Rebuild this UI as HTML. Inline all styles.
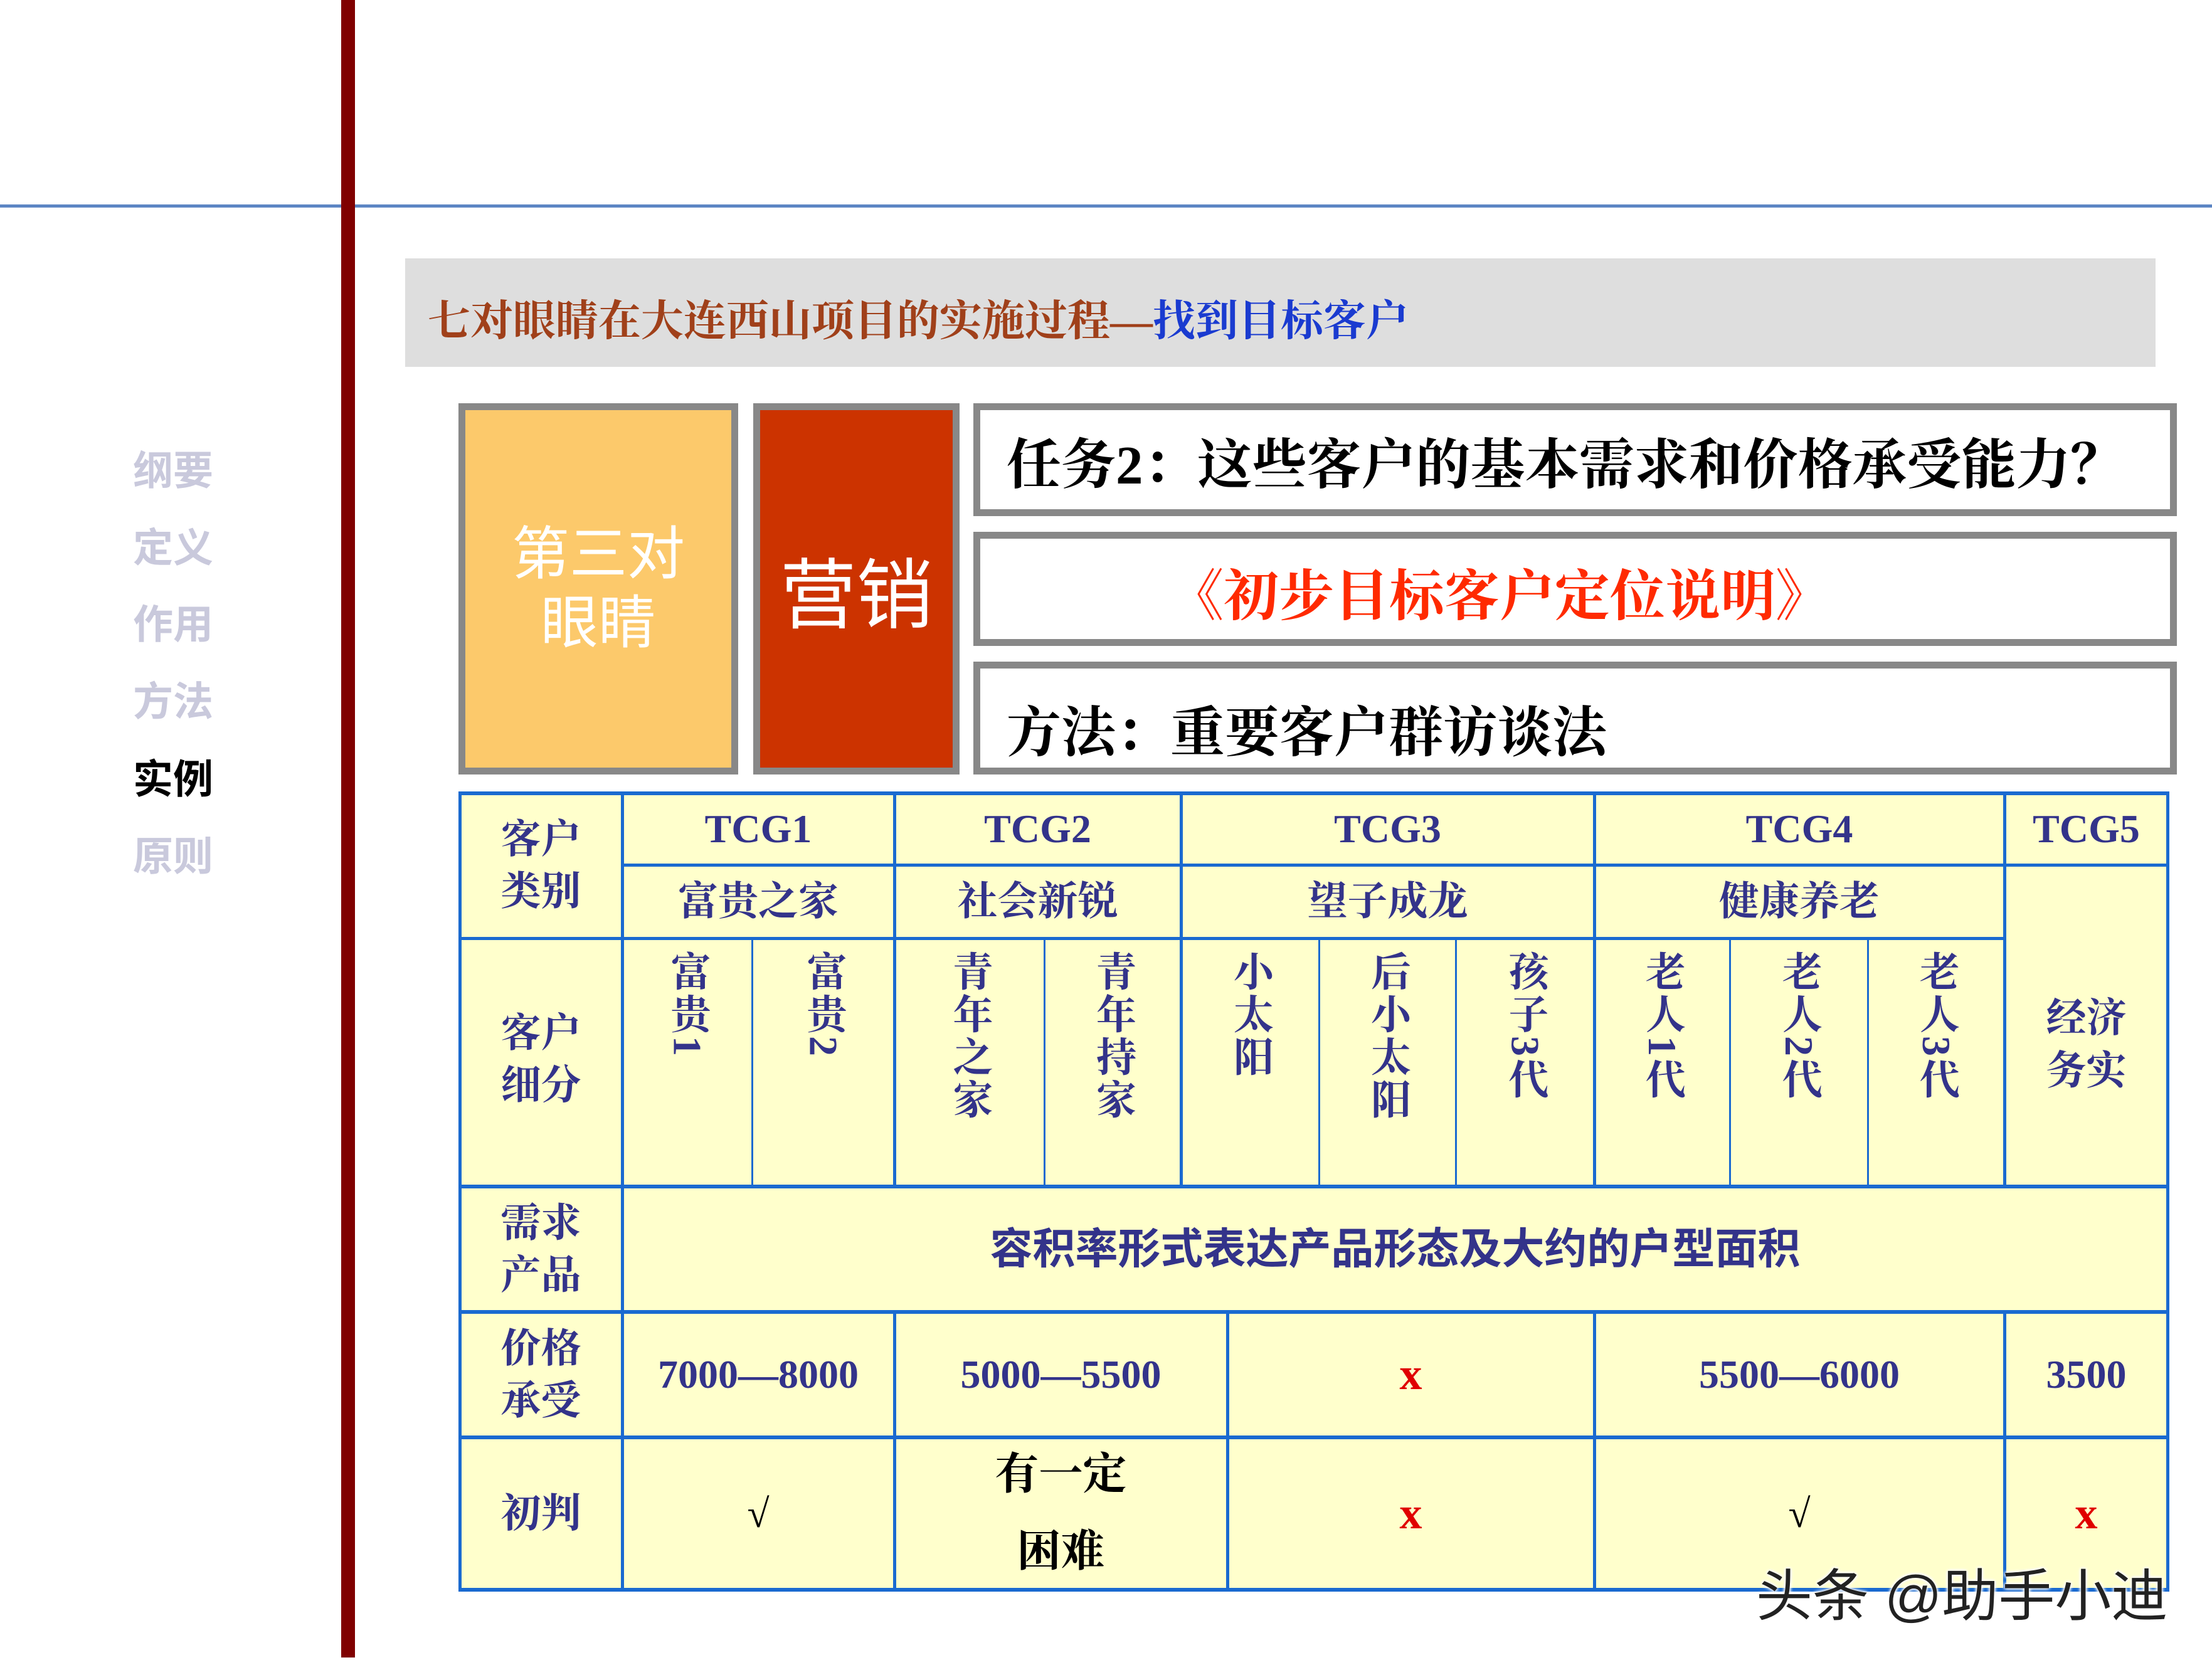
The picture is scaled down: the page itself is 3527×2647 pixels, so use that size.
<!DOCTYPE html>
<html><head><meta charset="utf-8"><style>
*{margin:0;padding:0;box-sizing:border-box}
body{width:3527px;height:2647px;background:#fff;position:relative;overflow:hidden;font-family:"Liberation Sans","Noto Sans CJK SC",sans-serif}
.a{position:absolute}
.nav{position:absolute;left:212px;font-size:64px;font-weight:bold;color:#c9c9dc;font-family:"Liberation Sans","Noto Sans CJK SC",sans-serif}
.box{position:absolute;border:11px solid #888;background:#fff;display:flex;align-items:center}
.c{position:absolute;display:flex;align-items:center;justify-content:center;text-align:center;color:#33338a;font-size:64px;line-height:1.3;font-weight:bold;font-family:"Liberation Serif","Noto Serif CJK SC",serif}
.v{writing-mode:vertical-rl;text-orientation:mixed;justify-content:flex-start;padding-top:20px;line-height:1;letter-spacing:4px}
.h{position:absolute;background:#1a6ad0}
</style></head><body>
<div class="a" style="left:0;top:326px;width:3527px;height:5px;background:#5c86c4"></div>
<div class="a" style="left:544px;top:0;width:22px;height:2643px;background:#800000"></div>

<div class="nav" style="top:700px">纲要</div>
<div class="nav" style="top:823px">定义</div>
<div class="nav" style="top:945px">作用</div>
<div class="nav" style="top:1068px">方法</div>
<div class="nav" style="top:1192px;color:#000">实例</div>
<div class="nav" style="top:1315px">原则</div>

<div class="a" style="left:646px;top:412px;width:2791px;height:173px;background:#dedede"></div>
<div class="a" style="left:682px;top:458px;font-size:68px;color:#a0401a;white-space:nowrap;font-weight:bold;font-family:'Liberation Serif','Noto Serif CJK SC',serif">七对眼睛在大连西山项目的实施过程—<span style="color:#1a3bd0">找到目标客户</span></div>

<div class="a" style="left:731px;top:643px;width:446px;height:592px;background:#fcc96b;border:11px solid #888;display:flex;align-items:center;justify-content:center;text-align:center;color:#fff;font-size:92px;line-height:1.2">第三对<br>眼睛</div>
<div class="a" style="left:1201px;top:643px;width:329px;height:592px;background:#cc3300;border:11px solid #888;display:flex;align-items:center;justify-content:center;color:#fff;font-size:122px">营销</div>

<div class="box" style="left:1552px;top:643px;width:1919px;height:180px;padding-left:42px;font-size:87px;color:#000;font-weight:bold;font-family:'Liberation Serif','Noto Serif CJK SC',serif">任务2：这些客户的基本需求和价格承受能力？</div>
<div class="box" style="left:1552px;top:848px;width:1919px;height:182px;padding-left:300px;font-size:88px;color:#ff2a00;padding-top:10px;font-weight:bold;font-family:'Liberation Serif','Noto Serif CJK SC',serif">《初步目标客户定位说明》</div>
<div class="box" style="left:1552px;top:1055px;width:1919px;height:180px;padding-left:42px;padding-top:30px;font-size:87px;color:#000;font-weight:bold;font-family:'Liberation Serif','Noto Serif CJK SC',serif">方法：重要客户群访谈法</div>

<div class="a" style="left:733px;top:1264px;width:2724px;height:1271px;background:#ffffcc"></div>
<div class="h" style="left:733px;top:1262px;width:2724px;height:6px"></div>
<div class="h" style="left:992px;top:1377px;width:2465px;height:5px"></div>
<div class="h" style="left:733px;top:1494px;width:2463px;height:5px"></div>
<div class="h" style="left:733px;top:1889px;width:2724px;height:6px"></div>
<div class="h" style="left:733px;top:2089px;width:2724px;height:6px"></div>
<div class="h" style="left:733px;top:2289px;width:2724px;height:6px"></div>
<div class="h" style="left:733px;top:2532px;width:2724px;height:6px"></div>
<div class="h" style="left:731px;top:1262px;width:5px;height:1276px"></div>
<div class="h" style="left:3454px;top:1262px;width:5px;height:1276px"></div>
<div class="h" style="left:990px;top:1262px;width:5px;height:1276px"></div>
<div class="h" style="left:1424px;top:1262px;width:5px;height:630px"></div>
<div class="h" style="left:2540px;top:1262px;width:5px;height:630px"></div>
<div class="h" style="left:3194px;top:1262px;width:5px;height:630px"></div>
<div class="h" style="left:1881px;top:1262px;width:5px;height:630px"></div>
<div class="h" style="left:1424px;top:2092px;width:5px;height:443px"></div>
<div class="h" style="left:1955px;top:2092px;width:5px;height:443px"></div>
<div class="h" style="left:2540px;top:2092px;width:5px;height:443px"></div>
<div class="h" style="left:3194px;top:2092px;width:5px;height:443px"></div>
<div class="h" style="left:1198px;top:1496px;width:3px;height:396px"></div>
<div class="h" style="left:1664px;top:1496px;width:3px;height:396px"></div>
<div class="h" style="left:2102px;top:1496px;width:3px;height:396px"></div>
<div class="h" style="left:2320px;top:1496px;width:3px;height:396px"></div>
<div class="h" style="left:2757px;top:1496px;width:3px;height:396px"></div>
<div class="h" style="left:2977px;top:1496px;width:3px;height:396px"></div>

<div class="c" style="left:733px;top:1264px;width:259px;height:232px">客户<br>类别</div>
<div class="c" style="left:992px;top:1264px;width:434px;height:115px">TCG1</div>
<div class="c" style="left:1426px;top:1264px;width:457px;height:115px">TCG2</div>
<div class="c" style="left:1883px;top:1264px;width:659px;height:115px">TCG3</div>
<div class="c" style="left:2542px;top:1264px;width:654px;height:115px">TCG4</div>
<div class="c" style="left:3196px;top:1264px;width:261px;height:115px">TCG5</div>
<div class="c" style="left:992px;top:1379px;width:434px;height:117px">富贵之家</div>
<div class="c" style="left:1426px;top:1379px;width:457px;height:117px">社会新锐</div>
<div class="c" style="left:1883px;top:1379px;width:659px;height:117px">望子成龙</div>
<div class="c" style="left:2542px;top:1379px;width:654px;height:117px">健康养老</div>
<div class="c" style="left:3196px;top:1379px;width:261px;height:513px;padding-top:60px">经济<br>务实</div>

<div class="c" style="left:733px;top:1496px;width:259px;height:396px;padding-bottom:10px">客户<br>细分</div>
<div class="c v" style="left:992px;top:1496px;width:207px;height:396px">富贵1</div>
<div class="c v" style="left:1199px;top:1496px;width:227px;height:396px">富贵2</div>
<div class="c v" style="left:1426px;top:1496px;width:239px;height:396px">青年之家</div>
<div class="c v" style="left:1665px;top:1496px;width:218px;height:396px">青年持家</div>
<div class="c v" style="left:1883px;top:1496px;width:220px;height:396px">小太阳</div>
<div class="c v" style="left:2103px;top:1496px;width:218px;height:396px">后小太阳</div>
<div class="c v" style="left:2321px;top:1496px;width:221px;height:396px">孩子3代</div>
<div class="c v" style="left:2542px;top:1496px;width:216px;height:396px">老人1代</div>
<div class="c v" style="left:2758px;top:1496px;width:220px;height:396px">老人2代</div>
<div class="c v" style="left:2978px;top:1496px;width:218px;height:396px">老人3代</div>

<div class="c" style="left:733px;top:1892px;width:259px;height:200px">需求<br>产品</div>
<div class="c" style="left:992px;top:1892px;width:2465px;height:200px;font-size:68px;font-family:'Liberation Sans','Noto Sans CJK SC',sans-serif">容积率形式表达产品形态及大约的户型面积</div>

<div class="c" style="left:733px;top:2092px;width:259px;height:200px">价格<br>承受</div>
<div class="c" style="left:992px;top:2092px;width:434px;height:200px">7000—8000</div>
<div class="c" style="left:1426px;top:2092px;width:531px;height:200px">5000—5500</div>
<div class="c" style="left:1957px;top:2092px;width:585px;height:200px;color:#e00000;font-size:72px">x</div>
<div class="c" style="left:2542px;top:2092px;width:654px;height:200px">5500—6000</div>
<div class="c" style="left:3196px;top:2092px;width:261px;height:200px">3500</div>

<div class="c" style="left:733px;top:2292px;width:259px;height:243px">初判</div>
<div class="c" style="left:992px;top:2292px;width:434px;height:243px;color:#000">√</div>
<div class="c" style="left:1426px;top:2292px;width:531px;height:243px;color:#000;line-height:1.75;font-size:70px">有一定<br>困难</div>
<div class="c" style="left:1957px;top:2292px;width:585px;height:243px;color:#e00000;font-size:72px">x</div>
<div class="c" style="left:2542px;top:2292px;width:654px;height:243px;color:#000">√</div>
<div class="c" style="left:3196px;top:2292px;width:261px;height:243px;color:#e00000;font-size:72px">x</div>

<div class="a" style="left:2800px;top:2472px;font-size:90px;color:#222;white-space:nowrap;text-shadow:0 0 6px #fff,0 0 6px #fff,0 0 6px #fff">头条 @助手小迪</div>
</body></html>
